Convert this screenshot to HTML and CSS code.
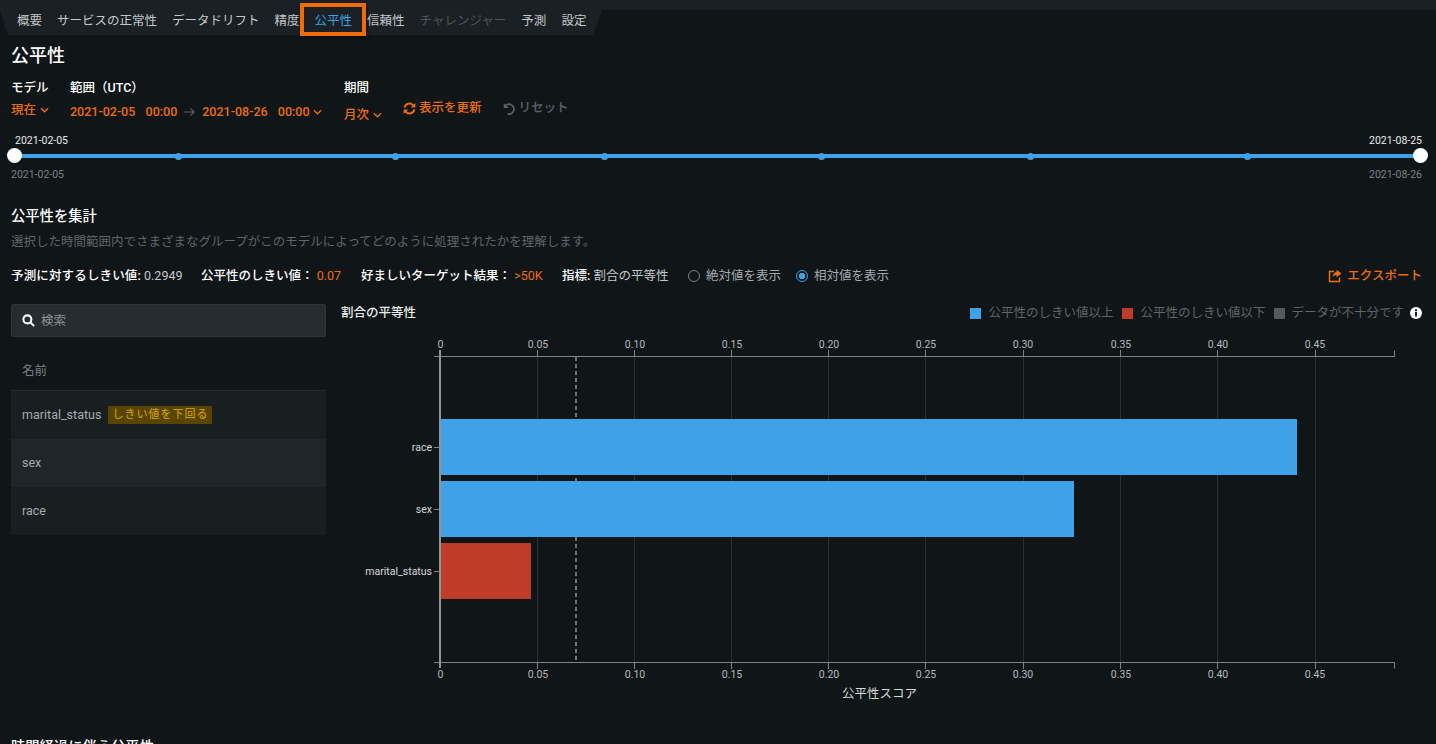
FILE: index.html
```html
<!DOCTYPE html>
<html lang="ja">
<head>
<meta charset="utf-8">
<title>公平性</title>
<link rel="stylesheet" href="styles.css">
</head>
<body>
<div class="topline"></div>
<nav class="tabs">
  <a class="tab">概要</a>
  <a class="tab">サービスの正常性</a>
  <a class="tab">データドリフト</a>
  <a class="tab">精度</a>
  <a class="tab active">公平性</a>
  <a class="tab">信頼性</a>
  <a class="tab disabled">チャレンジャー</a>
  <a class="tab">予測</a>
  <a class="tab">設定</a>
</nav>
<main class="page">
  <h1 class="title">公平性</h1>
  <section class="filters">
    <div class="filter f-model">
      <div class="flabel">モデル</div>
      <div class="fvalue">現在 <svg class="chev" viewBox="0 0 10 6"><path d="M1 1l4 4 4-4"/></svg></div>
    </div>
    <div class="filter f-range">
      <div class="flabel">範囲（UTC）</div>
      <div class="fvalue low"><span class="dt">2021-02-05&nbsp;&nbsp;00:00</span><svg class="arrow" viewBox="0 0 12 10"><path d="M0 5h10.500M7 1l4 4-4 4"/></svg><span class="dt">2021-08-26&nbsp;&nbsp;00:00</span><svg class="chev" viewBox="0 0 10 6"><path d="M1 1l4 4 4-4"/></svg></div>
    </div>
    <div class="filter f-period">
      <div class="flabel">期間</div>
      <div class="fvalue lower">月次 <svg class="chev" viewBox="0 0 10 6"><path d="M1 1l4 4 4-4"/></svg></div>
    </div>
    <button class="btn refresh"><svg class="ico" viewBox="0 0 14 14"><path d="M1.800 6a5.200 5.200 0 0 1 9-2.600L12 4.800M12.200 8a5.200 5.200 0 0 1-9 2.600L2 9.200"/><path class="fill" d="M13.300 1v5h-5zM0.700 13V8h5z"/></svg>表示を更新</button>
    <button class="btn reset"><svg class="ico" viewBox="0 0 14 14"><path d="M3.200 3.600A5.300 5.300 0 1 1 5 12.800"/><path class="fill" d="M0.800 1v5.500h5.500z"/></svg>リセット</button>
  </section>

  <section class="slider">
    <div class="dates upper"><span>2021-02-05</span><span>2021-08-25</span></div>
    <div class="track">
      <i class="dot d1"></i><i class="dot d2"></i><i class="dot d3"></i><i class="dot d4"></i><i class="dot d5"></i><i class="dot d6"></i>
      <i class="knob kl"></i><i class="knob kr"></i>
    </div>
    <div class="dates lower-dates"><span>2021-02-05</span><span>2021-08-26</span></div>
  </section>

  <h2 class="section-title first">公平性を集計</h2>
  <p class="desc">選択した時間範囲内でさまざまなグループがこのモデルによってどのように処理されたかを理解します。</p>

  <section class="meta">
    <span class="m m1"><b>予測に対するしきい値:</b> 0.2949</span>
    <span class="m m2"><b>公平性のしきい値：</b> <em>0.07</em></span>
    <span class="m m3"><b>好ましいターゲット結果：</b> <em>&gt;50K</em></span>
    <span class="m m4"><b>指標:</b> 割合の平等性</span>
    <label class="radio r1"><i class="rc"></i>絶対値を表示</label>
    <label class="radio r2"><i class="rc on"></i>相対値を表示</label>
    <a class="export"><svg class="ico-export" viewBox="0 0 14 14"><path class="box" d="M6 2.500H1.500v10h10V8.500"/><path class="fill" d="M8.500 0.800l5 3.700-5 3.700V6C6.500 6 5.300 6.800 4.800 9 4.600 5.500 6 3.300 8.500 3z"/></svg>エクスポート</a>
  </section>

  <section class="content">
    <aside class="side">
      <div class="search"><svg class="sico" viewBox="0 0 14 14"><circle cx="5.800" cy="5.800" r="4.300"/><path d="M9 9l4 4"/></svg><span>検索</span></div>
      <div class="thead">名前</div>
      <div class="row odd">marital_status <span class="badge">しきい値を下回る</span></div>
      <div class="row even">sex</div>
      <div class="row odd last">race</div>
    </aside>
    <div class="chart">
      <div class="chart-head">
        <h3 class="chart-title">割合の平等性</h3>
        <div class="legend">
          <i class="sw blue"></i><span>公平性のしきい値以上</span>
          <i class="sw red"></i><span>公平性のしきい値以下</span>
          <i class="sw gray"></i><span>データが不十分です</span>
          <svg class="info" viewBox="0 0 12 12"><circle cx="6" cy="6" r="6"/><rect x="5" y="5" width="2" height="4.500"/><rect x="5" y="2.300" width="2" height="1.800"/></svg>
        </div>
      </div>
      <svg class="plot" viewBox="0 0 1095 393" width="1095" height="393">
        <g class="grid">
          <path d="M196.500 35v306M293.500 35v306M390.500 35v306M487.500 35v306M584.500 35v306M682.500 35v306M779.500 35v306M876.500 35v306M974.500 35v306"/>
        </g>
        <g class="bars">
          <rect class="b-blue" x="100" y="98" width="856" height="56"/>
          <rect class="b-blue" x="100" y="160" width="633" height="56"/>
          <rect class="b-red" x="100" y="222" width="90" height="56"/>
        </g>
        <path class="thr" d="M235 36v62M235 157v3M235 216v125"/>
        <g class="axis">
          <path d="M93 35.500h960.500v-6M93 341.500h960.500v6"/>
          <path class="thick" d="M99 29v318"/>
          <path d="M196.500 29v6M293.500 29v6M390.500 29v6M487.500 29v6M584.500 29v6M682.500 29v6M779.500 29v6M876.500 29v6M974.500 29v6M196.500 342v6M293.500 342v6M390.500 342v6M487.500 342v6M584.500 342v6M682.500 342v6M779.500 342v6M876.500 342v6M974.500 342v6M93 126.500h5M93 188.500h5M93 250.500h5"/>
        </g>
        <g class="ticks">
          <text x="99.500" y="27">0</text><text x="197" y="27">0.05</text><text x="294" y="27">0.10</text><text x="391" y="27">0.15</text><text x="488" y="27">0.20</text><text x="585" y="27">0.25</text><text x="682" y="27">0.30</text><text x="780" y="27">0.35</text><text x="877" y="27">0.40</text><text x="974" y="27">0.45</text>
          <text x="99.500" y="357">0</text><text x="197" y="357">0.05</text><text x="294" y="357">0.10</text><text x="391" y="357">0.15</text><text x="488" y="357">0.20</text><text x="585" y="357">0.25</text><text x="682" y="357">0.30</text><text x="780" y="357">0.35</text><text x="877" y="357">0.40</text><text x="974" y="357">0.45</text>
        </g>
        <g class="ylabels">
          <text x="91" y="130">race</text><text x="91" y="192">sex</text><text x="91" y="254">marital_status</text>
        </g>
        <text class="xlabel" x="538.500" y="377">公平性スコア</text>
      </svg>
    </div>
  </section>
  <h2 class="section-title next">時間経過に伴う公平性</h2>
</main>
</body>
</html>
```
FILE: styles.css
```css
* { box-sizing: border-box; }
html, body { margin: 0; height: 744px; overflow: hidden; }
body {
  background: #101618;
  color: #fff;
  font-family: Roboto, "Noto Sans CJK JP", sans-serif;
  font-size: 12.500px;
  line-height: 16px;
}
.topline { height: 10px; background: #1a2024; }

/* Tabs */
.tabs {
  position: relative;
  isolation: isolate;
  display: flex;
  gap: 15px;
  height: 25px;
  width: 602px;
  padding-left: 17px;
}
.tabs::before {
  content: "";
  position: absolute;
  inset: 0;
  z-index: -1;
  background: #1a2024;
  clip-path: polygon(0 0, 100% 0, 98.500% 100%, 1.300% 100%);
}
.tab { line-height: 21px; color: #c4c8cb; white-space: nowrap; }
.tab.active { position: relative; color: #3fa2e8; }
.tab.active::after {
  content: "";
  box-sizing: border-box;
  position: absolute;
  left: -15px;
  top: -7px;
  width: 66px;
  height: 33px;
  border: 4px solid #ef6c0c;
  box-shadow: 0 2px 4px rgba(0, 0, 0, .5);
}
.tab.disabled { color: #50565a; }

.page { padding: 0 14px 0 11px; }
.title { margin: 0; padding-top: 7px; font-size: 18px; font-weight: 500; line-height: 28px; height: 35px; }

/* Filters */
.filters { display: flex; height: 64px; }
.flabel { font-weight: 500; line-height: 16px; padding-top: 10px; height: 26px; }
.fvalue { color: #ed6c0e; font-weight: 500; line-height: 16px; display: flex; align-items: center; gap: 1px; white-space: pre; padding-top: 6px; }
.fvalue.low { padding-top: 8px; gap: 3px; }
.fvalue.lower { padding-top: 11px; }
.dt { word-spacing: 2px; }
.f-model { width: 59px; }
.f-range { width: 274px; }
.f-period { width: 59px; }
.chev { width: 9px; height: 6px; fill: none; stroke: #ed6c0e; stroke-width: 1.500; }
.arrow { width: 11px; height: 10px; margin: 0 4px; fill: none; stroke: #5c6266; stroke-width: 1.200; }
.btn { background: none; border: 0; padding: 0; font: inherit; font-weight: 500; display: flex; align-items: center; gap: 3px; height: 16px; margin-top: 30px; }
.ico { width: 13px; height: 13px; fill: none; stroke: currentColor; stroke-width: 2.200; }
.ico .fill { fill: currentColor; stroke: none; }
.refresh { color: #ed6c0e; margin-right: 21px; }
.reset { color: #5c6266; }
.reset .ico { stroke-width: 1.800; }

/* Slider */
.dates { display: flex; justify-content: space-between; font-size: 10.500px; line-height: 14px; }
.dates.upper { padding-left: 4px; color: #e8eaeb; height: 14px; }
.lower-dates { color: #7c8184; margin-top: 10px; }
.track { position: relative; height: 4px; margin: 6px 1px 0 3px; background: #3fa2e8; }
.dot { position: absolute; top: -1px; width: 7px; height: 7px; margin-left: -3.500px; border-radius: 50%; background: #3fa2e8; }
.d1 { left: 164px; }
.d2 { left: 381px; }
.d3 { left: 590px; }
.d4 { left: 807px; }
.d5 { left: 1016px; }
.d6 { left: 1233px; }
.knob { position: absolute; top: -6px; width: 15px; height: 15px; border-radius: 50%; background: #fff; }
.kl { left: -7px; }
.kr { right: -7px; }

/* Summary */
.section-title { margin: 0; font-size: 14.300px; font-weight: 500; line-height: 18px; }
.section-title.first { margin-top: 25px; }
.section-title.next { margin-top: -3px; }
.desc { margin: 9px 0 0; line-height: 16px; color: #5f6569; }
.meta { display: flex; align-items: center; height: 16px; margin-top: 18px; color: #c4c8cb; white-space: pre; }
.m b { font-weight: 500; color: #fff; }
.m em { font-style: normal; color: #ed6c0e; }
.m1 { width: 190px; }
.m1 b { letter-spacing: .15px; }
.m2 { width: 160px; }
.m3 { width: 201px; }
.m4 { width: 126px; }
.radio { display: flex; align-items: center; gap: 6px; width: 108px; color: #a6abae; }
.radio.r2 { width: auto; }
.rc { width: 12px; height: 12px; border: 1px solid #7c8184; border-radius: 50%; display: block; }
.rc.on { border-color: #3fa2e8; background: radial-gradient(circle, #3fa2e8 0 3px, transparent 3.500px); }
.export { margin-left: auto; display: flex; align-items: center; gap: 5px; color: #ed6c0e; font-weight: 500; }
.ico-export { width: 14px; height: 14px; fill: none; stroke: #ed6c0e; stroke-width: 1.500; }
.ico-export .fill { fill: #ed6c0e; stroke: none; }

/* Content */
.content { display: flex; margin-top: 20px; height: 437px; }
.side { width: 315px; flex: none; }
.search { height: 33px; background: #262c30; border: 1px solid #2f3539; border-radius: 2px; display: flex; align-items: center; padding-left: 10px; gap: 6px; color: #8d9295; }
.sico { width: 13px; height: 13px; fill: none; stroke: #fff; stroke-width: 2.200; }
.thead { height: 54px; padding: 26px 11px 0; color: #7c8184; border-bottom: 1px solid #252b2e; }
.row { height: 48px; padding-left: 11px; display: flex; align-items: center; gap: 7px; color: #a6abae; }
.row.odd { background: #191e21; }
.row.even { background: #1f2529; }
.row.last { border-radius: 0 0 2px 2px; }
.badge { background: #5a4500; color: #d9a800; font-size: 11px; line-height: 18px; height: 18px; padding: 0 4px; border-radius: 1px; letter-spacing: 1px; }

.chart { margin-left: 15px; width: 1081px; }
.chart-head { display: flex; justify-content: space-between; align-items: flex-start; height: 17px; padding-top: 1px; }
.chart-title { margin: 0; font-size: 12.500px; font-weight: 500; line-height: 16px; color: #e8eaeb; }
.legend { display: flex; align-items: center; color: #5f6569; height: 16px; }
.sw { width: 11px; height: 11px; display: block; margin-right: 7px; }
.legend span { margin-right: 9px; }
.blue { background: #3fa2e8; }
.red { background: #bf3c29; }
.gray { background: #55595c; margin-right: 6px; }
.info { width: 12px; height: 12px; margin-left: -3px; }
.info circle { fill: #fff; }
.info rect { fill: #101618; }
.plot { display: block; overflow: visible; }
.grid path { stroke: #2a3033; fill: none; }
.b-blue { fill: #3fa2e8; }
.b-red { fill: #bf3c29; }
.thr { stroke: #6e7477; stroke-width: 2; stroke-dasharray: 4 3; fill: none; }
.axis path { stroke: #7e8386; fill: none; }
.axis .thick { stroke-width: 2; stroke: #8f9497; }
.ticks text { font-size: 10.500px; fill: #b6babc; text-anchor: middle; }
.ylabels text { font-size: 10.500px; fill: #d6d8da; text-anchor: end; }
.xlabel { font-size: 12.500px; fill: #d6d8da; text-anchor: middle; }
```
